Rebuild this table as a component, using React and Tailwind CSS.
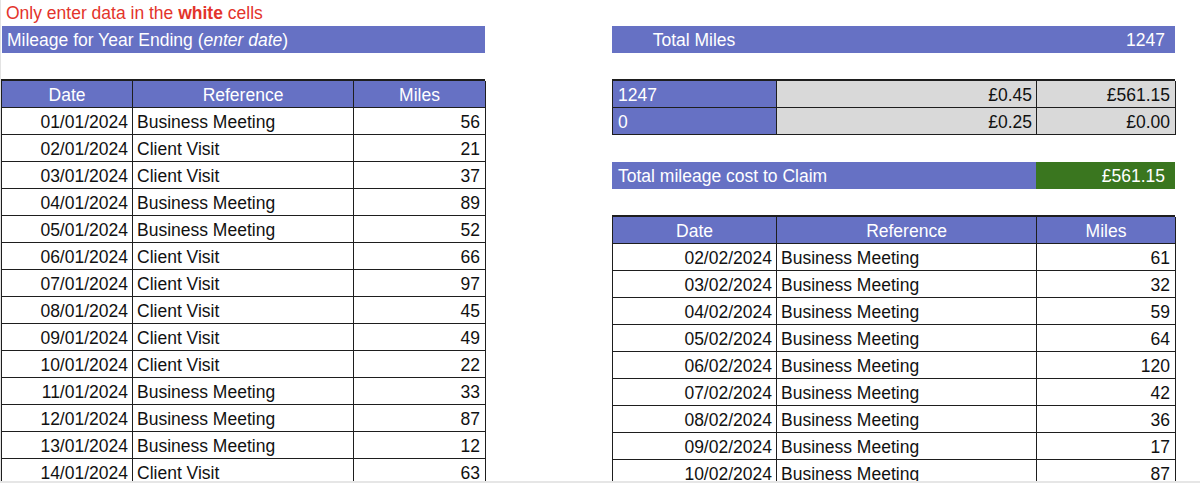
import React from "react";

const left = [
  ["01/01/2024", "Business Meeting", 56],
  ["02/01/2024", "Client Visit", 21],
  ["03/01/2024", "Client Visit", 37],
  ["04/01/2024", "Business Meeting", 89],
  ["05/01/2024", "Business Meeting", 52],
  ["06/01/2024", "Client Visit", 66],
  ["07/01/2024", "Client Visit", 97],
  ["08/01/2024", "Client Visit", 45],
  ["09/01/2024", "Client Visit", 49],
  ["10/01/2024", "Client Visit", 22],
  ["11/01/2024", "Business Meeting", 33],
  ["12/01/2024", "Business Meeting", 87],
  ["13/01/2024", "Business Meeting", 12],
  ["14/01/2024", "Client Visit", 63],
];

const right = [
  ["02/02/2024", "Business Meeting", 61],
  ["03/02/2024", "Business Meeting", 32],
  ["04/02/2024", "Business Meeting", 59],
  ["05/02/2024", "Business Meeting", 64],
  ["06/02/2024", "Business Meeting", 120],
  ["07/02/2024", "Business Meeting", 42],
  ["08/02/2024", "Business Meeting", 36],
  ["09/02/2024", "Business Meeting", 17],
  ["10/02/2024", "Business Meeting", 87],
];

function MileageTable({ rows, cols }) {
  return (
    <div className="border-t-2 border-l border-[#1e1e1e]">
      <div className="flex h-[27px] bg-[#6671c4] text-white">
        {["Date", "Reference", "Miles"].map((h, i) => (
          <div
            key={h}
            className={`${cols[i]} shrink-0 border-r border-b border-[#1e1e1e] text-center leading-[28px]`}
          >
            {h}
          </div>
        ))}
      </div>
      {rows.map(([date, ref, miles]) => (
        <div key={date} className="flex h-[27px] bg-white text-[#111]">
          <div className={`${cols[0]} shrink-0 border-r border-b border-[#1e1e1e] pr-1 text-right leading-[28px]`}>
            {date}
          </div>
          <div className={`${cols[1]} shrink-0 border-r border-b border-[#1e1e1e] pl-1 leading-[28px]`}>
            {ref}
          </div>
          <div className={`${cols[2]} shrink-0 border-r border-b border-[#1e1e1e] pr-[5px] text-right leading-[28px]`}>
            {miles}
          </div>
        </div>
      ))}
    </div>
  );
}

export default function App() {
  return (
    <div className="flex h-[483px] w-[1200px] flex-col overflow-hidden bg-white font-['Liberation_Sans',Arial,sans-serif] text-[17.5px]">
      <div className="flex min-h-0 flex-1 items-start overflow-hidden border-l border-[#e3e3e3]">
        {/* left side */}
        <div className="w-[484px] shrink-0">
          <div className="h-[26px] pl-[5px] leading-[27px] text-[#e3342b]">
            Only enter data in the <span className="font-bold">white</span> cells
          </div>
          <div className="ml-px h-[27px] bg-[#6671c4] pl-[5px] leading-[29px] text-white">
            Mileage for Year Ending (<span className="italic">enter date</span>)
          </div>
          <div className="h-[26px]" />
          <MileageTable rows={left} cols={["w-[131px]", "w-[221px]", "w-[132px]"]} />
        </div>

        {/* right side */}
        <div className="ml-[127px] w-[563px] shrink-0">
          <div className="h-[26px]" />
          <div className="flex h-[27px] bg-[#6671c4] leading-[29px] text-white">
            <div className="w-[164px] shrink-0 text-center">Total Miles</div>
            <div className="flex-1 pr-[10px] text-right">1247</div>
          </div>
          <div className="h-[26px]" />
          <div className="border-t-2 border-l border-[#1e1e1e]">
            {[
              ["1247", "£0.45", "£561.15"],
              ["0", "£0.25", "£0.00"],
            ].map(([m, rate, cost]) => (
              <div key={rate} className="flex h-[27px] leading-[28px]">
                <div className="w-[164px] shrink-0 border-r border-b border-[#1e1e1e] bg-[#6671c4] pl-[5px] text-white">
                  {m}
                </div>
                <div className="w-[260px] shrink-0 border-r border-b border-[#1e1e1e] bg-[#d9d9d9] pr-1 text-right text-[#111]">
                  {rate}
                </div>
                <div className="w-[139px] shrink-0 border-r border-b border-[#1e1e1e] bg-[#d9d9d9] pr-[5px] text-right text-[#111]">
                  {cost}
                </div>
              </div>
            ))}
          </div>
          <div className="h-[27px]" />
          <div className="flex h-[27px] leading-[29px] text-white">
            <div className="w-[424px] shrink-0 bg-[#6671c4] pl-[6px]">Total mileage cost to Claim</div>
            <div className="flex-1 bg-[#3a761f] pr-[10px] text-right">£561.15</div>
          </div>
          <div className="h-[26px]" />
          <MileageTable rows={right} cols={["w-[164px]", "w-[260px]", "w-[139px]"]} />
        </div>
      </div>
      <div className="h-[2px] shrink-0 bg-[#e6e6e6]" />
    </div>
  );
}
